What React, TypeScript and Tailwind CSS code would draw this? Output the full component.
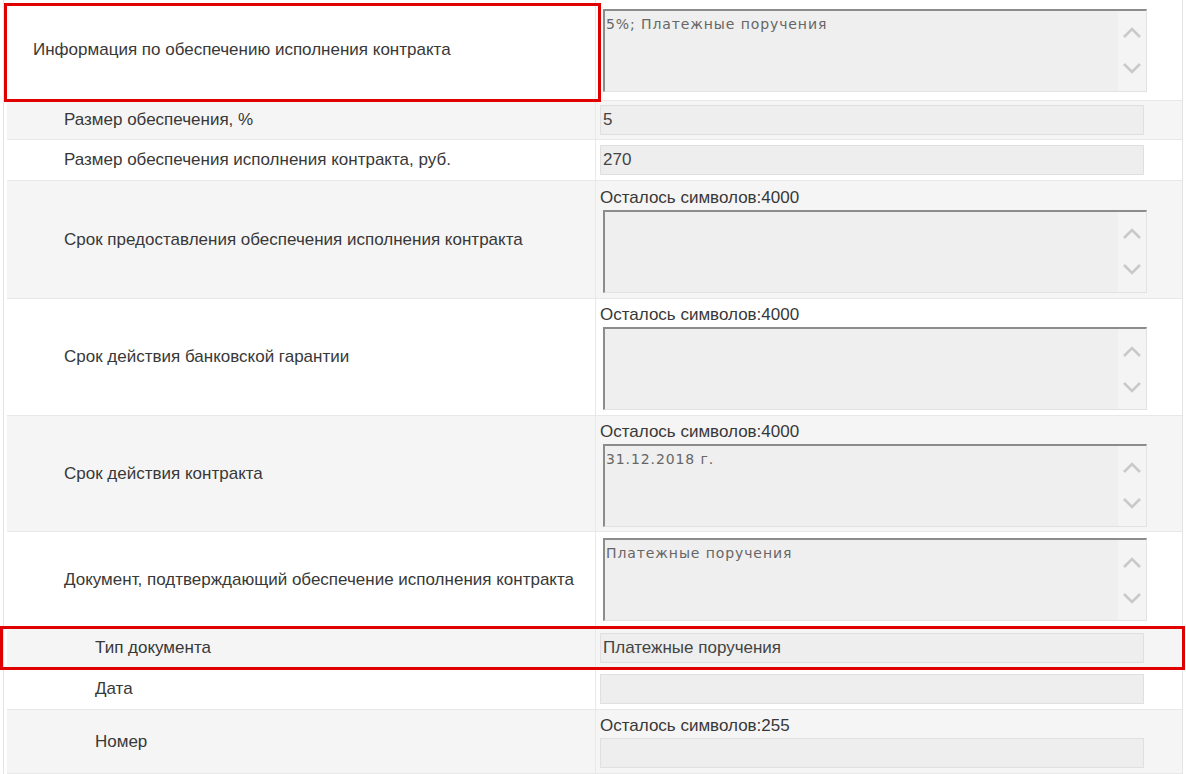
const LABEL = "text-[17px] text-[#383838]";

function Chevrons() {
  return (
    <div className="flex h-full w-[28px] flex-col items-center justify-center gap-[23px] bg-[#f4f4f4]">
      <svg width="20" height="12" viewBox="0 0 20 12" fill="none" stroke="#c9c9c9" strokeWidth="2.5" aria-hidden="true">
        <polyline points="2 10 10 2 18 10" />
      </svg>
      <svg width="20" height="12" viewBox="0 0 20 12" fill="none" stroke="#c9c9c9" strokeWidth="2.5" aria-hidden="true">
        <polyline points="2 2 10 10 18 2" />
      </svg>
    </div>
  );
}

function TextArea({ value }: { value?: string }) {
  return (
    <div className="ml-[3px] flex h-[83px] w-[544px] border-t-2 border-l-2 border-t-[#8c8c8c] border-l-[#8c8c8c] border-r border-b border-r-[#e2e2e2] border-b-[#e2e2e2] bg-[#efefef]">
      <div className="flex-1 pl-[1px] pt-[4px] text-[14px] tracking-[0.9px] text-[#666] leading-[18px]" style={{ fontFamily: '"DejaVu Sans", sans-serif' }}>
        {value}
      </div>
      <Chevrons />
    </div>
  );
}

function Input({ value }: { value?: string }) {
  return (
    <div className="flex h-[30px] w-[544px] items-center border border-[#e0e0e0] bg-[#eeeeee] pl-[2px] text-[17px] text-[#444]">
      {value}
    </div>
  );
}

function Counter({ n }: { n: number }) {
  return <div className="mb-[3px] mt-[2px] text-[17px] leading-[18px] text-[#383838]">Осталось символов:{n}</div>;
}

type Row = {
  label: string;
  indent: number;
  h: string;
  gray: boolean;
  right: React.ReactNode;
};

const rows: Row[] = [
  { label: "Информация по обеспечению исполнения контракта", indent: 26, h: "h-[101px]", gray: false, right: <TextArea value="5%; Платежные поручения" /> },
  { label: "Размер обеспечения, %", indent: 57, h: "h-[39px]", gray: true, right: <Input value="5" /> },
  { label: "Размер обеспечения исполнения контракта, руб.", indent: 57, h: "h-[41px]", gray: false, right: <Input value="270" /> },
  { label: "Срок предоставления обеспечения исполнения контракта", indent: 57, h: "h-[118px]", gray: true, right: <><Counter n={4000} /><TextArea /></> },
  { label: "Срок действия банковской гарантии", indent: 57, h: "h-[117px]", gray: false, right: <><Counter n={4000} /><TextArea /></> },
  { label: "Срок действия контракта", indent: 57, h: "h-[116px]", gray: true, right: <><Counter n={4000} /><TextArea value="31.12.2018 г." /></> },
  { label: "Документ, подтверждающий обеспечение исполнения контракта", indent: 57, h: "h-[96px]", gray: false, right: <TextArea value="Платежные поручения" /> },
  { label: "Тип документа", indent: 88, h: "h-[40px]", gray: true, right: <Input value="Платежные поручения" /> },
  { label: "Дата", indent: 88, h: "h-[42px]", gray: false, right: <Input /> },
  { label: "Номер", indent: 88, h: "h-[64px]", gray: true, right: <><Counter n={255} /><Input /></> },
];

export default function App() {
  return (
    <div className="relative h-[774px] w-[1186px] overflow-hidden bg-white" style={{ fontFamily: '"Liberation Sans", Arial, sans-serif' }}>
      <div className="ml-[3px] w-[1180px] border-l border-r border-[#e4e4e4] pl-[3px]">
        {rows.map((r, i) => (
          <div
            key={i}
            className={`grid grid-cols-[588px_1fr] border-b border-[#e8e8e8] ${r.h} ${r.gray ? "bg-[#f5f5f5]" : "bg-white"}`}
          >
            <div className={`flex items-center ${LABEL}`} style={{ paddingLeft: r.indent }}>
              {r.label}
            </div>
            <div className="flex flex-col justify-center border-l border-[#e8e8e8] pl-[4px]">
              {r.right}
            </div>
          </div>
        ))}
      </div>

      {/* red highlight frames */}
      <div className="pointer-events-none absolute left-[4px] top-[3px] h-[99px] w-[597px] border-[3px] border-[#e00000]" />
      <div className="pointer-events-none absolute left-0 top-[626px] h-[44px] w-[1185px] border-[3px] border-[#e00000]" />
    </div>
  );
}
